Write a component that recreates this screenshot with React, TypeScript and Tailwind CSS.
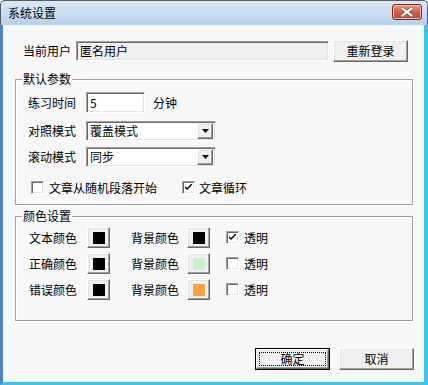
import React from "react";

const raised =
  "border border-t-white border-l-white border-b-[#696969] border-r-[#696969] shadow-[inset_-1px_-1px_#a0a0a0,inset_1px_1px_#e3e3e3] bg-[#f0f0f0]";
const sunken =
  "border border-t-[#a0a0a0] border-l-[#a0a0a0] border-b-white border-r-white shadow-[inset_1px_1px_#696969,inset_-1px_-1px_#e3e3e3]";

function Button({ label, primary }: { label: string; primary?: boolean }) {
  if (primary) {
    return (
      <div className="w-[75px] h-[22px] border border-black">
        <div className={`${raised} w-full h-full flex items-center justify-center p-[2px]`}>
          <div className="w-full h-full border border-dotted border-black flex items-center justify-center leading-none">
            {label}
          </div>
        </div>
      </div>
    );
  }
  return (
    <div className={`${raised} w-[75px] h-[22px] flex items-center justify-center leading-none`}>
      {label}
    </div>
  );
}

function Checkbox({ checked }: { checked?: boolean }) {
  return (
    <div className={`${sunken} w-[13px] h-[13px] bg-white flex items-center justify-center`}>
      {checked && (
        <svg width="7" height="7" viewBox="0 0 7 7">
          <path d="M0 2 L0 4 L2 6 L7 1 L7 -1 L2 4 Z" fill="black" />
        </svg>
      )}
    </div>
  );
}

function Select({ value }: { value: string }) {
  return (
    <div className={`${sunken} w-[130px] h-[20px] bg-white flex items-center p-[2px]`}>
      <span className="flex-1 pl-[1px] leading-none">{value}</span>
      <div className={`${raised} w-[16px] h-[16px] flex items-center justify-center`}>
        <svg width="7" height="4" viewBox="0 0 7 4">
          <path d="M0 0 H7 L3.5 4 Z" fill="black" />
        </svg>
      </div>
    </div>
  );
}

function ColorButton({ color }: { color: string }) {
  return (
    <div className={`${raised} w-[23px] h-[21px] flex items-center justify-center`}>
      <div className="w-[12px] h-[12px]" style={{ background: color }} />
    </div>
  );
}

function Group({ title, height, children }: { title: string; height: number; children: React.ReactNode }) {
  return (
    <div
      className="relative ml-[12px] w-[398px] border border-[#a0a0a0] shadow-[1px_1px_white,inset_1px_1px_white]"
      style={{ height }}
    >
      <span className="absolute -top-[7px] left-[6px] bg-[#f7f7f7] px-[1px] leading-none">{title}</span>
      {children}
    </div>
  );
}

const colorRows = [
  { label: "文本颜色", bg: "#000000", transparent: true },
  { label: "正确颜色", bg: "#c6efce", transparent: false },
  { label: "错误颜色", bg: "#ffa040", transparent: false },
];

export default function App() {
  return (
    <div
      className="w-[428px] h-[385px] flex flex-col text-[12px] text-black bg-[#f7f7f7]"
      style={{ fontFamily: '"Noto Sans CJK SC", "Liberation Sans", sans-serif' }}
    >
      {/* title bar */}
      <div className="h-[25px] shrink-0 flex items-center justify-between border-t border-l border-r border-[#555c66] rounded-t-[5px] bg-linear-to-b from-[#dce8f6] to-[#b7cfeb]">
        <span className="pl-[7px] leading-none">系统设置</span>
        <div className="mr-[5px] mb-[3px] w-[30px] h-[16px] rounded-[3px] border border-[#7a2a20] bg-linear-to-b from-[#e8a093] via-[#d05d4a] to-[#c24530] flex items-center justify-center shadow-[inset_0_0_0_1px_#f0b8ac]">
          <svg width="12" height="10" viewBox="0 0 12 10">
            <path d="M1 1 L11 9 M11 1 L1 9" stroke="#5a5a5a" strokeWidth="3.4" strokeLinecap="square" />
            <path d="M1.5 1.5 L10.5 8.5 M10.5 1.5 L1.5 8.5" stroke="white" strokeWidth="2.2" strokeLinecap="square" />
          </svg>
        </div>
      </div>

      {/* client */}
      <div className="flex-1 flex flex-col border-l-[3px] border-r-[4px] border-b-[3px] border-l-[#4a86c8] border-r-[#3cc0ec] border-b-[#3cc0ec]">
        <div className="mt-[15px] pl-[20px] flex items-center h-[22px]">
          <span className="w-[48px] leading-none">当前用户</span>
          <div className={`${sunken} ml-[5px] w-[253px] h-[20px] bg-[#f0f0f0] flex items-center pl-[3px] leading-none`}>
            匿名用户
          </div>
          <div className="ml-[4px]">
            <Button label="重新登录" />
          </div>
        </div>

        <div className="mt-[17px]">
          <Group title="默认参数" height={126}>
            <div className="pt-[12px] pl-[12px] flex flex-col">
              <div className="flex items-center h-[21px]">
                <span className="w-[48px] leading-none">练习时间</span>
                <div className={`${sunken} ml-[10px] w-[59px] h-[21px] bg-white flex items-center pl-[3px] leading-none`}>
                  5
                </div>
                <span className="ml-[8px] leading-none">分钟</span>
              </div>
              <div className="mt-[8px] flex items-center h-[20px]">
                <span className="w-[48px] leading-none">对照模式</span>
                <div className="ml-[10px]">
                  <Select value="覆盖模式" />
                </div>
              </div>
              <div className="mt-[6px] flex items-center h-[20px]">
                <span className="w-[48px] leading-none">滚动模式</span>
                <div className="ml-[10px]">
                  <Select value="同步" />
                </div>
              </div>
              <div className="mt-[14px] flex items-center h-[13px] pl-[3px]">
                <Checkbox />
                <span className="ml-[5px] w-[133px] leading-none">文章从随机段落开始</span>
                <Checkbox checked />
                <span className="ml-[4px] leading-none">文章循环</span>
              </div>
            </div>
          </Group>
        </div>

        <div className="mt-[11px]">
          <Group title="颜色设置" height={105}>
            <div className="pt-[10px] pl-[13px] flex flex-col gap-[5px]">
              {colorRows.map((r) => (
                <div key={r.label} className="flex items-center h-[21px]">
                  <span className="w-[48px] leading-none">{r.label}</span>
                  <div className="ml-[10px]">
                    <ColorButton color="#000000" />
                  </div>
                  <span className="ml-[21px] w-[56px] leading-none">背景颜色</span>
                  <ColorButton color={r.bg} />
                  <div className="ml-[16px]">
                    <Checkbox checked={r.transparent} />
                  </div>
                  <span className="ml-[5px] leading-none">透明</span>
                </div>
              ))}
            </div>
          </Group>
        </div>

        <div className="mt-[27px] flex justify-end gap-[9px] pr-[10px]">
          <Button label="确定" primary />
          <Button label="取消" />
        </div>
      </div>
    </div>
  );
}
